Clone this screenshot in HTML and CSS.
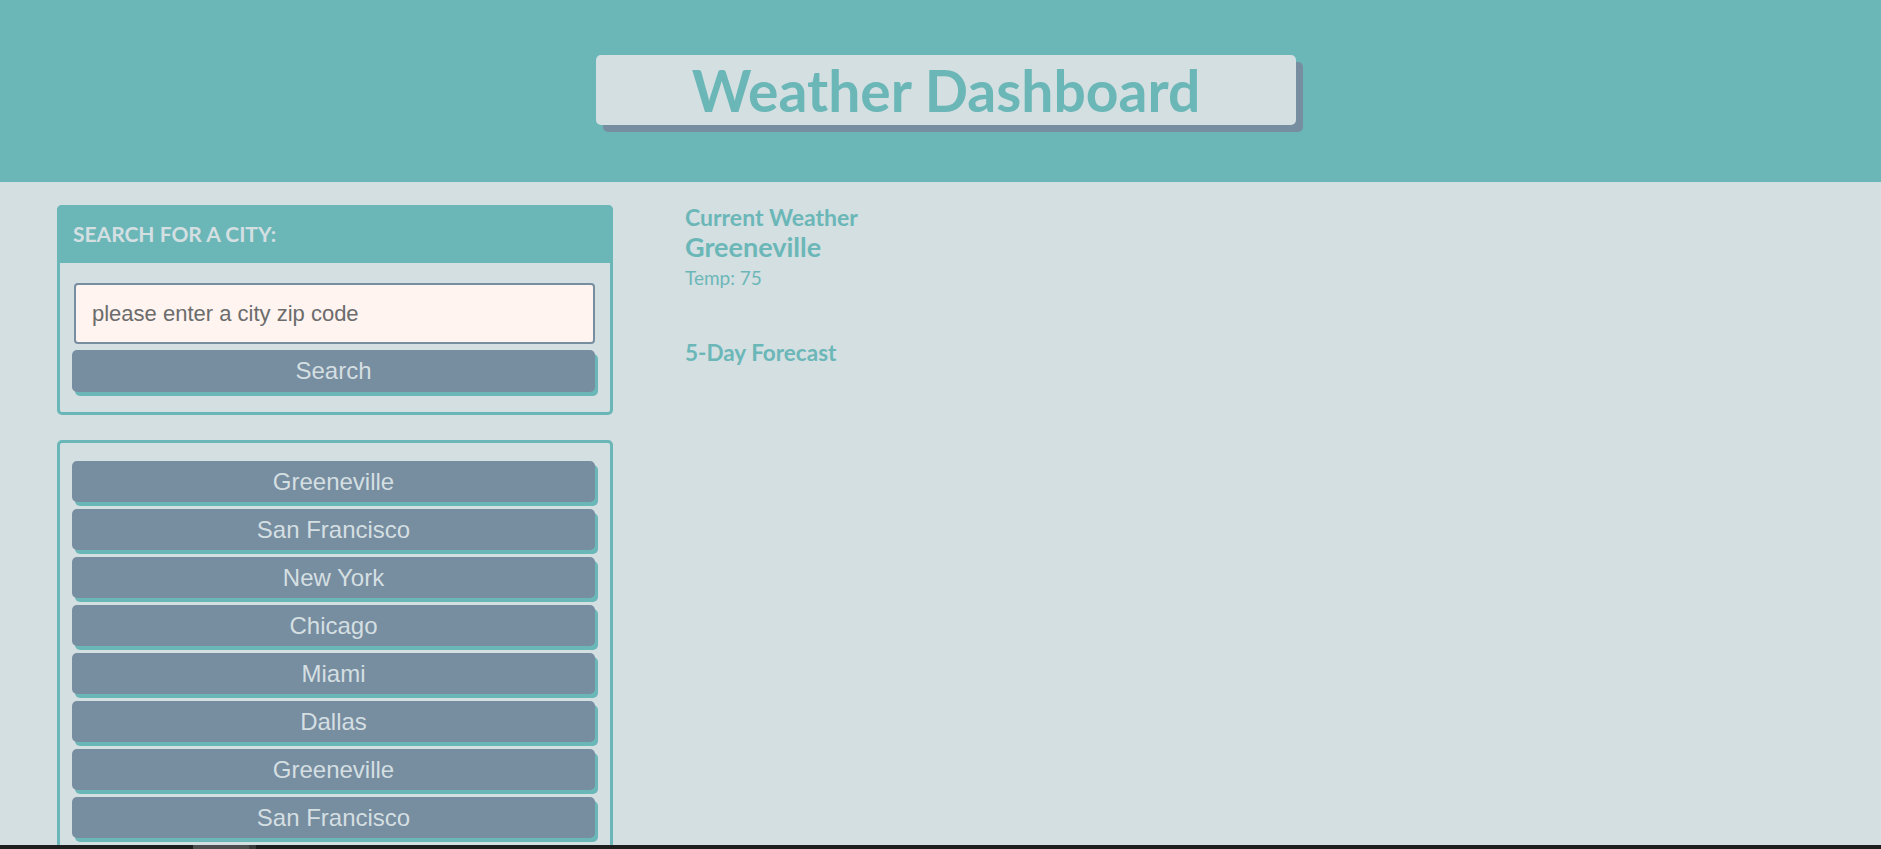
FILE: index.html
```html
<!DOCTYPE html>
<html lang="en">
<head>
<meta charset="utf-8">
<title>Weather Dashboard</title>
<link rel="stylesheet" href="styles.css">
</head>
<body>
<header class="site-header">
  <h1 class="title-box">Weather Dashboard</h1>
</header>
<main class="layout">
  <aside class="sidebar">
    <section class="panel search-panel">
      <h2 class="panel-header">SEARCH FOR A CITY:</h2>
      <div class="panel-body">
        <input class="city-input" type="text" placeholder="please enter a city zip code">
        <button class="btn btn-search">Search</button>
      </div>
    </section>
    <section class="panel history-panel">
      <div class="panel-body history-list">
        <button class="btn">Greeneville</button>
        <button class="btn">San Francisco</button>
        <button class="btn">New York</button>
        <button class="btn">Chicago</button>
        <button class="btn">Miami</button>
        <button class="btn">Dallas</button>
        <button class="btn">Greeneville</button>
        <button class="btn">San Francisco</button>
        <button class="btn">New York</button>
        <button class="btn">Chicago</button>
        <button class="btn">Miami</button>
        <button class="btn">Dallas</button>
      </div>
    </section>
  </aside>
  <section class="content">
    <h3 class="label">Current Weather</h3>
    <h2 class="city">Greeneville</h2>
    <p class="temp">Temp: 75</p>
    <h3 class="label forecast">5-Day Forecast</h3>
  </section>
</main>
<div class="hscroll"><div class="hscroll-thumb"></div><div class="hscroll-edge"></div></div>
</body>
</html>
```

FILE: styles.css
```css
html, body {
  overflow: hidden;
}
body {
  margin: 0;
  background: #d4dfe2;
  font-family: "Trebuchet MS", Lato, "DejaVu Sans", sans-serif;
  color: #6bb7b8;
}
.site-header {
  height: 182px;
  background: #6bb7b8;
  display: flex;
  justify-content: center;
  align-items: flex-start;
  padding-left: 11px;
  box-sizing: border-box;
}
.title-box {
  margin: 55px 0 0;
  width: 700px;
  height: 70px;
  background: #d4dfe2;
  border-radius: 5px;
  box-shadow: 7px 7px 0 #778da0;
  color: #6bb7b8;
  font-size: 57px;
  font-weight: 700;
  line-height: 70px;
  text-align: center;
}
.layout {
  display: flex;
  align-items: flex-start;
  padding: 23px 0 0 57px;
}
.sidebar {
  width: 556px;
  display: flex;
  flex-direction: column;
  gap: 25px;
}
.panel {
  border: 3px solid #6bb7b8;
  border-radius: 5px;
}
.panel-header {
  margin: -3px -3px 0;
  height: 58px;
  background: #6bb7b8;
  border-radius: 5px 5px 0 0;
  color: #d4dfe2;
  font-size: 21px;
  font-weight: 700;
  line-height: 58px;
  padding-left: 16px;
  box-sizing: border-box;
}
.panel-body {
  display: flex;
  flex-direction: column;
  padding: 20px 15px 20px 12px;
}
.city-input {
  margin: 0 0 6px 2px;
  height: 61px;
  box-sizing: border-box;
  background: #fff4ef;
  border: 2px solid #778da0;
  border-radius: 4px;
  padding: 0 16px;
  font-family: "Liberation Sans", Arial, sans-serif;
  font-size: 22px;
  color: #333;
  outline: none;
}
.city-input::placeholder {
  color: #6c6c6c;
}
.btn {
  height: 41px;
  border: none;
  border-radius: 5px;
  background: #778da0;
  box-shadow: 3px 4px 0 #6bb7b8;
  color: #d4dfe2;
  font-family: "Liberation Sans", Arial, sans-serif;
  font-size: 24px;
  padding: 0;
  cursor: pointer;
}
.btn-search {
  height: 42px;
}
.history-list {
  padding-top: 18px;
  gap: 7px;
}
.content {
  margin-left: 72px;
}
.label {
  margin: 0;
  font-size: 23px;
  font-weight: 700;
  line-height: 24px;
}
.city {
  margin: 3px 0 0;
  font-size: 27px;
  font-weight: 700;
  line-height: 30px;
}
.temp {
  margin: 5px 0 0;
  font-size: 19px;
  line-height: 22px;
}
.forecast {
  margin-top: 52px;
  font-size: 22.5px;
}
.hscroll {
  position: fixed;
  left: 0;
  right: 0;
  bottom: 0;
  height: 4px;
  background: #1e1e1e;
  display: flex;
}
.hscroll-thumb {
  margin-left: 193px;
  width: 56px;
  background: #4d4d4d;
}
.hscroll-edge {
  width: 7px;
  background: #3a3a3a;
}
```
